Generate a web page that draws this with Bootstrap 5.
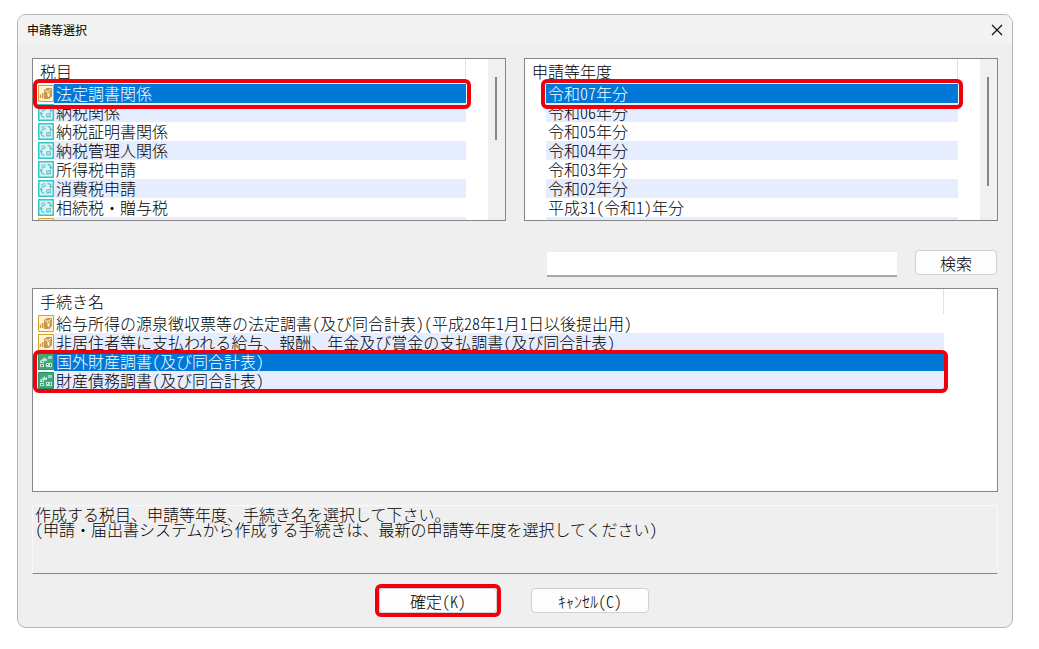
<!DOCTYPE html>
<html lang="ja">
<head>
<meta charset="utf-8">
<meta name="viewport" content="width=device-width, initial-scale=1">
<title>申請等選択</title>
<link href="https://cdn.jsdelivr.net/npm/bootstrap@5.3.0/dist/css/bootstrap.min.css" rel="stylesheet">
<style>
body{background:#fff;color:#000;font-family:"Noto Sans CJK JP",sans-serif;font-size:16px;font-weight:300;line-height:19px}
body,button,input{font-feature-settings:"hwid"}
.dialog{margin:14px 26px 20px 17px;background:#efefef;border:1px solid #b4b4b4;border-radius:9px;overflow:hidden}
.titlebar{height:29px;padding:0 9px;background:#f3f3f3;font-size:12px;font-weight:400}
.close-btn{width:12px;height:12px;line-height:0}
.dialog-body{padding:14px}
.panes{gap:18px}
.pane{background:#fff;border:1px solid #868686;overflow:hidden}
.pane-top{height:163px}
.pane-bottom{height:204px;padding-right:53px}
.list{width:100%;border-collapse:separate;border-spacing:0}
.pane-top .list-wrap{padding-right:22px}
.list th{height:25px;padding:0 7px;font-weight:inherit;border-right:1px solid #e2e2e2}
.list td{height:19px;padding:0 0 0 5px;position:relative}
.ico{width:16px;height:17px;flex:none}
.ico svg{display:block;width:16px;height:17px}
.cell-text{height:19px;line-height:18px;padding-left:2px;white-space:nowrap}
.alt .cell-text{background:#e6edff}
.chosen .cell-text{background:#0078d7;color:#fff}
.ring{position:absolute;z-index:2;border:4px solid #ee000c;border-radius:6px;pointer-events:none}
.ring-tax{inset:-5px -5px -6px 0}
.ring-year{inset:-5px -5px -6px 16px}
.ring-proc{top:-2px;left:0;right:-4px;height:43px}
.track{width:17px;flex:none;background:#f0f0f0;padding:18px 0 0 7px}
.thumb{width:2px;background:#868686}
.thumb-tax{height:63px}
.thumb-year{height:109px}
.search-row{margin:29px 1px 11px;gap:18px}
.search-box{width:350px;height:25px;margin-top:2px;background:#fff;border:0;border-bottom:2px solid #a8a8a8;border-radius:0;padding:0 4px}
.push{height:25px;background:#fdfdfd;border:1px solid #d0d0d0;border-radius:4px;padding:0;color:#000;position:relative;font-weight:inherit;line-height:20px}
.push-search{width:82px}
.push-act{width:118px}
.ring-ok{inset:-5px}
.notice{height:69px;margin-top:13px;padding:1px 2px;line-height:15px;border:1px solid #f9f9f9;border-bottom-color:#868686}
.actions{gap:34px;margin-top:14px;padding-right:2px}
</style>
</head>
<body>
<svg class="d-none" aria-hidden="true">
<symbol id="i-gold" viewBox="0 0 16 17"><path fill="#fff3d2" stroke="#d9a02c" d="M.5.5h15v16H.5z"/><path fill="#c9974d" d="M6 5l3-2h5v8l-3 3H6z"/><path stroke="#fff3d2" fill="none" d="M7 6h4l2-2M9 7l1.500 2L12 7M10.500 9v3M9 10h3"/><path stroke="#c9974d" fill="none" stroke-width="1.400" d="M2.500 13V9.500M4.700 13V8"/></symbol>
<symbol id="i-cyan" viewBox="0 0 16 17"><path fill="#d5f8f7" stroke="#2fc8c8" stroke-width="1.500" d="M.75.75h14.500v15.500H.75z"/><path fill="#7cc5c9" d="M3 4l4-1 1 3-4 2zM8 9.500l5-1v5H8z"/><path fill="none" stroke="#76bcc2" stroke-width="1.300" d="M9.500 3.500q3.500 0 3.500 3.500M3 9q0 4 3.500 4.500M11.500 6l1.500 1.500L14 6M2 10l1-1.500L4.500 10"/><path stroke="#d5f8f7" d="M4 5.500l3-1M9 11h3"/></symbol>
<symbol id="i-green" viewBox="0 0 16 17"><path fill="#3fa77b" stroke="#259363" d="M.5.5h15v16H.5z"/><path fill="#bfe5d3" d="M2 8l5-4v2l2-1v3H6v2H2zM8 10h6v4H8zM2 11h4v3H2z"/><path fill="#a0d5bd" d="M10 3h4v3h-4z"/><path fill="#23865a" d="M3 12h2v1H3zM9 11h1v1H9zM12 11h1v2h-1zM4 8h1v1H4z"/></symbol>
</svg>
<main class="dialog">
<header class="titlebar d-flex align-items-center justify-content-between"><span>申請等選択</span>
<button type="button" class="close-btn btn p-0 border-0" aria-label="閉じる"><svg width="12" height="12" viewBox="0 0 12 12"><path d="M1 1l10 10M11 1L1 11" stroke="#111" stroke-width="1.200"/></svg></button></header>
<div class="dialog-body">
<div class="panes d-flex">
<section class="pane pane-top d-flex flex-fill w-50">
<div class="list-wrap flex-grow-1"><table class="list"><thead><tr><th scope="col">税目</th></tr></thead><tbody>
<tr class="chosen"><td><div class="d-flex align-items-center"><span class="ico"><svg><use href="#i-gold"/></svg></span><span class="cell-text flex-grow-1">法定調書関係</span></div><span class="ring ring-tax"></span></td></tr>
<tr class="alt"><td><div class="d-flex align-items-center"><span class="ico"><svg><use href="#i-cyan"/></svg></span><span class="cell-text flex-grow-1">納税関係</span></div></td></tr>
<tr><td><div class="d-flex align-items-center"><span class="ico"><svg><use href="#i-cyan"/></svg></span><span class="cell-text flex-grow-1">納税証明書関係</span></div></td></tr>
<tr class="alt"><td><div class="d-flex align-items-center"><span class="ico"><svg><use href="#i-cyan"/></svg></span><span class="cell-text flex-grow-1">納税管理人関係</span></div></td></tr>
<tr><td><div class="d-flex align-items-center"><span class="ico"><svg><use href="#i-cyan"/></svg></span><span class="cell-text flex-grow-1">所得税申請</span></div></td></tr>
<tr class="alt"><td><div class="d-flex align-items-center"><span class="ico"><svg><use href="#i-cyan"/></svg></span><span class="cell-text flex-grow-1">消費税申請</span></div></td></tr>
<tr><td><div class="d-flex align-items-center"><span class="ico"><svg><use href="#i-cyan"/></svg></span><span class="cell-text flex-grow-1">相続税・贈与税</span></div></td></tr>
<tr class="alt"><td><div class="d-flex align-items-center"><span class="ico"><svg><use href="#i-gold"/></svg></span><span class="cell-text flex-grow-1"></span></div></td></tr>
</tbody></table></div>
<div class="track"><div class="thumb thumb-tax"></div></div>
</section>
<section class="pane pane-top d-flex flex-fill w-50">
<div class="list-wrap flex-grow-1"><table class="list"><thead><tr><th scope="col">申請等年度</th></tr></thead><tbody>
<tr class="chosen"><td><div class="d-flex"><span class="ico"></span><span class="cell-text flex-grow-1">令和07年分</span></div><span class="ring ring-year"></span></td></tr>
<tr class="alt"><td><div class="d-flex"><span class="ico"></span><span class="cell-text flex-grow-1">令和06年分</span></div></td></tr>
<tr><td><div class="d-flex"><span class="ico"></span><span class="cell-text flex-grow-1">令和05年分</span></div></td></tr>
<tr class="alt"><td><div class="d-flex"><span class="ico"></span><span class="cell-text flex-grow-1">令和04年分</span></div></td></tr>
<tr><td><div class="d-flex"><span class="ico"></span><span class="cell-text flex-grow-1">令和03年分</span></div></td></tr>
<tr class="alt"><td><div class="d-flex"><span class="ico"></span><span class="cell-text flex-grow-1">令和02年分</span></div></td></tr>
<tr><td><div class="d-flex"><span class="ico"></span><span class="cell-text flex-grow-1">平成31(令和1)年分</span></div></td></tr>
<tr class="alt"><td><div class="d-flex"><span class="ico"></span><span class="cell-text flex-grow-1"></span></div></td></tr>
</tbody></table></div>
<div class="track"><div class="thumb thumb-year"></div></div>
</section>
</div>
<form class="search-row d-flex justify-content-end align-items-start"><input type="text" class="search-box" aria-label="手続き名の検索"><button type="button" class="push push-search">検索</button></form>
<section class="pane pane-bottom"><table class="list"><thead><tr><th scope="col">手続き名</th></tr></thead><tbody>
<tr><td><div class="d-flex align-items-center"><span class="ico"><svg><use href="#i-gold"/></svg></span><span class="cell-text flex-grow-1">給与所得の源泉徴収票等の法定調書(及び同合計表)(平成28年1月1日以後提出用)</span></div></td></tr>
<tr class="alt"><td><div class="d-flex align-items-center"><span class="ico"><svg><use href="#i-gold"/></svg></span><span class="cell-text flex-grow-1">非居住者等に支払われる給与、報酬、年金及び賞金の支払調書(及び同合計表)</span></div></td></tr>
<tr class="chosen"><td><div class="d-flex align-items-center"><span class="ico"><svg><use href="#i-green"/></svg></span><span class="cell-text flex-grow-1">国外財産調書(及び同合計表)</span></div><span class="ring ring-proc"></span></td></tr>
<tr class="alt"><td><div class="d-flex align-items-center"><span class="ico"><svg><use href="#i-green"/></svg></span><span class="cell-text flex-grow-1">財産債務調書(及び同合計表)</span></div></td></tr>
</tbody></table></section>
<p class="notice mb-0">作成する税目、申請等年度、手続き名を選択して下さい。<br>(申請・届出書システムから作成する手続きは、最新の申請等年度を選択してください)</p>
<div class="actions d-flex justify-content-center"><button type="button" class="push push-act">確定(K)<span class="ring ring-ok"></span></button><button type="button" class="push push-act">ｷｬﾝｾﾙ(C)</button></div>
</div>
</main>
<script src="https://cdn.jsdelivr.net/npm/bootstrap@5.3.0/dist/js/bootstrap.bundle.min.js"></script>
</body>
</html>
